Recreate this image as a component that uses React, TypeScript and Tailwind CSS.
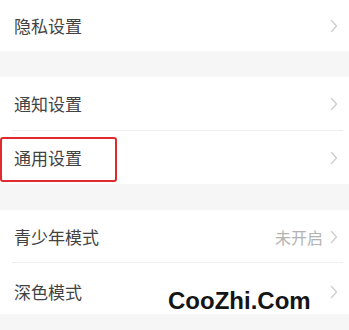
type Item = { label: string; value?: string; h: string; boxed?: boolean }

const groups: Item[][] = [
  [{ label: "隐私设置", h: "h-[51px]" }],
  [
    { label: "通知设置", h: "h-[54px]" },
    { label: "通用设置", h: "h-[53px]", boxed: true },
  ],
  [
    { label: "青少年模式", value: "未开启", h: "h-[53px]" },
    { label: "深色模式", h: "h-[51px] pt-[6px]" },
  ],
]

function Chevron() {
  return (
    <svg width="8" height="14" viewBox="0 0 8 14" fill="none" stroke="#cdcdcd" strokeWidth="1.3" strokeLinecap="round" strokeLinejoin="round">
      <polyline points="1.5,1.5 6.5,7 1.5,12.5" />
    </svg>
  )
}

function Row({ item, divider }: { item: Item; divider: boolean }) {
  return (
    <div className={`relative flex items-center pl-[14px] pr-[11px] ${item.h}`}>
      <span className="text-[17px] text-[#424242]">{item.label}</span>
      <div className="ml-auto flex items-center gap-[7px]">
        {item.value && <span className="text-[16px] text-[#b3b3b3]">{item.value}</span>}
        <Chevron />
      </div>
      {divider && <div className="absolute bottom-0 left-[12px] right-[6px] h-px bg-[#eeeeee]" />}
      {item.boxed && (
        <div className="absolute left-0 top-[6px] h-[45px] w-[117px] rounded-[3px] border-2 border-[#e02a2e]" />
      )}
    </div>
  )
}

export default function App() {
  return (
    <div
      className="relative flex h-[330px] w-[349px] flex-col gap-[26px] overflow-hidden bg-[#f6f6f6]"
      style={{ fontFamily: '"Noto Sans CJK SC", "Noto Sans", sans-serif' }}
    >
      {groups.map((g, gi) => (
        <div key={gi} className="bg-white">
          {g.map((item, i) => (
            <Row key={item.label} item={item} divider={i < g.length - 1} />
          ))}
        </div>
      ))}

      {/* watermark */}
      <div
        className="absolute left-[168px] top-[289px] text-[24px] font-bold leading-none text-[#151515]"
        style={{ fontFamily: '"Liberation Sans", Arial, sans-serif' }}
      >
        CooZhi.Com
      </div>
    </div>
  )
}
